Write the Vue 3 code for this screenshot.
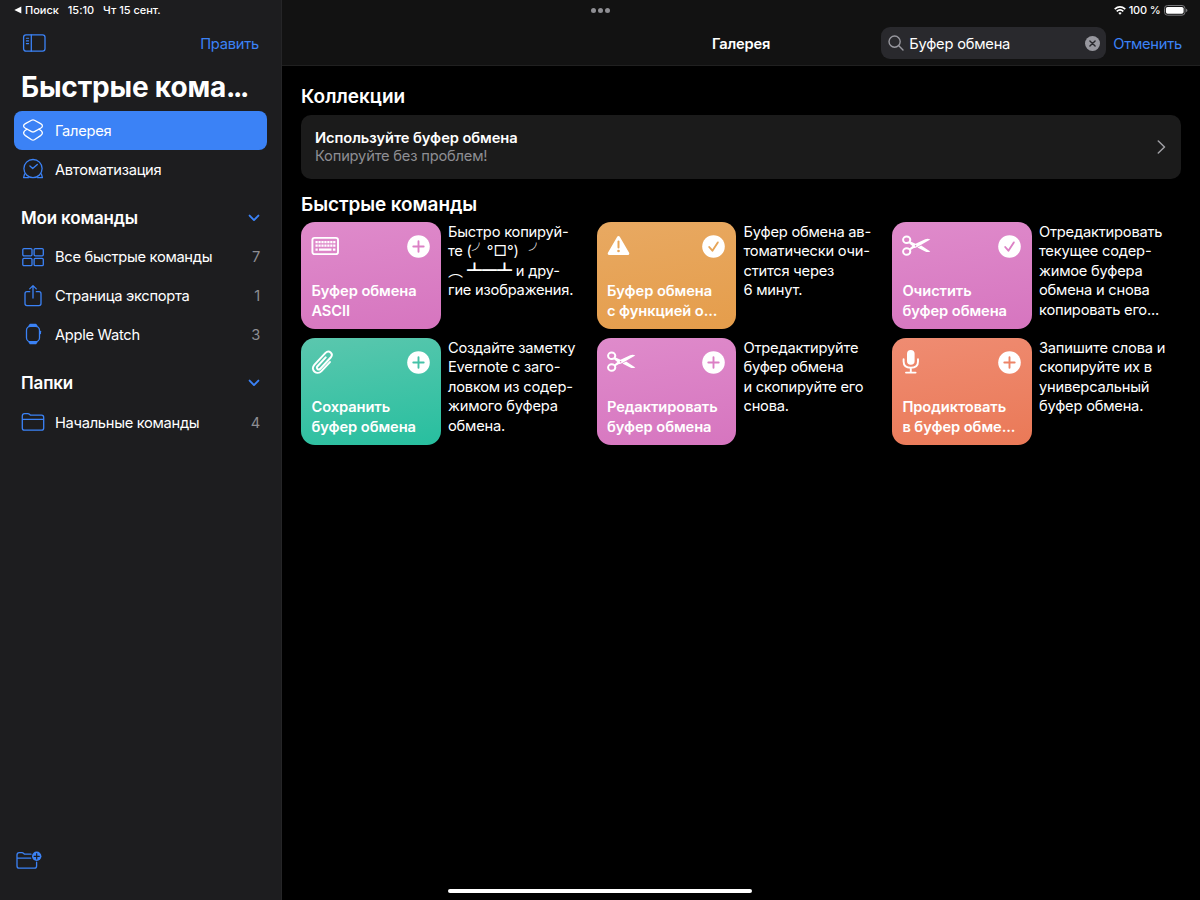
<script setup>
import { ref } from 'vue'

const search = ref('Буфер обмена')
const selected = ref('gallery')

const mainItems = [
  { id: 'gallery', title: 'Галерея' },
  { id: 'automation', title: 'Автоматизация' }
]

const sections = ref([
  {
    title: 'Мои команды',
    items: [
      { id: 'all', title: 'Все быстрые команды', count: 7 },
      { id: 'share', title: 'Страница экспорта', count: 1 },
      { id: 'watch', title: 'Apple Watch', count: 3 }
    ]
  },
  {
    title: 'Папки',
    items: [{ id: 'folder', title: 'Начальные команды', count: 4 }]
  }
])

const shortcuts = [
  { icon: 'keyboard', color: 'pink', added: false, title: ['Буфер обмена', 'ASCII'], text: ['Быстро копируй-', '', '', 'гие изображения.'], ascii: true },
  { icon: 'warning', color: 'orange', added: true, title: ['Буфер обмена', 'с функцией о...'], text: ['Буфер обмена ав-', 'томатически очи-', 'стится через', '6 минут.'] },
  { icon: 'scissors', color: 'pink', added: true, title: ['Очистить', 'буфер обмена'], text: ['Отредактировать', 'текущее содер-', 'жимое буфера', 'обмена и снова', 'копировать его...'] },
  { icon: 'clip', color: 'green', added: false, title: ['Сохранить', 'буфер обмена'], text: ['Создайте заметку', 'Evernote с заго-', 'ловком из содер-', 'жимого буфера', 'обмена.'] },
  { icon: 'scissors', color: 'pink', added: false, title: ['Редактировать', 'буфер обмена'], text: ['Отредактируйте', 'буфер обмена', 'и скопируйте его', 'снова.'] },
  { icon: 'mic', color: 'coral', added: false, title: ['Продиктовать', 'в буфер обме...'], text: ['Запишите слова и', 'скопируйте их в', 'универсальный', 'буфер обмена.'] }
]
</script>

<template>
  <div class="screen">
    <aside class="sidebar">
      <div class="status">
        <svg width="8" height="8" viewBox="0 0 8 8"><path d="M0.3 4 7.3 0.6v6.8z" fill="#fff" /></svg>
        <span class="back">Поиск</span>
        <span class="time">15:10</span>
        <span>Чт 15 сент.</span>
      </div>

      <div class="sideBar">
        <svg class="line" width="24" height="20" viewBox="0 0 24 20">
          <rect x="1.6" y="1.8" width="21.4" height="16.4" rx="2.4" />
          <path d="M9.3 1.8v16.4" />
          <path d="M4.4 5.2h2.2M4.4 7.900h2.200M4.400 10.600h2.200" stroke-width="1.1" />
        </svg>
        <button>Править</button>
      </div>

      <h1>Быстрые кома<span class="dotsEnd">...</span></h1>

      <nav>
        <a v-for="item in mainItems" :key="item.id" class="row" :class="{ active: selected === item.id }" @click="selected = item.id">
          <svg class="line" width="24" height="24" viewBox="0 0 24 24">
            <template v-if="item.id === 'gallery'">
              <path d="M10.600 2.200q1.400-.8 2.800 0l6.200 3.400q1.800 1 1.800 2.300 0 1.300-1.800 2.300l-6.200 3.400q-1.400.8-2.800 0L4.400 10.200Q2.600 9.200 2.600 7.900q0-1.300 1.800-2.300z" />
              <path d="M6 11.200q-3.400 1.800-3.400 3.800 0 1.300 1.800 2.600l6.200 4.100q1.400.8 2.800 0l6.200-4.100q1.800-1.300 1.800-2.600 0-2-3.400-3.800" />
            </template>
            <template v-else>
              <circle cx="12" cy="11.600" r="9.100" />
              <path d="M8.900 9 11.700 11.600 16.300 7.400" />
              <path d="M3.600 16.800 2.600 20.700h4.800M20.400 16.800l1 3.900h-4.800" />
            </template>
          </svg>
          <span>{{ item.title }}</span>
        </a>

        <section v-for="section in sections" :key="section.title">
          <header>
            <h2>{{ section.title }}</h2>
            <svg width="12" height="8" viewBox="0 0 12 8"><path d="M1.600 1.600 6 6.100l4.400-4.500" fill="none" stroke="#3b82f6" stroke-width="1.900" stroke-linecap="round" stroke-linejoin="round" /></svg>
          </header>
          <a v-for="item in section.items" :key="item.id" class="row" :class="{ active: selected === item.id }" @click="selected = item.id">
            <svg class="line" width="24" height="24" viewBox="0 0 24 24">
              <template v-if="item.id === 'all'">
                <rect x="1.800" y="3.600" width="9.200" height="7.200" rx="1.200" />
                <rect x="13.100" y="3.600" width="9.200" height="7.200" rx="1.200" />
                <rect x="1.800" y="13.400" width="9.200" height="7.200" rx="1.200" />
                <rect x="13.100" y="13.400" width="9.200" height="7.200" rx="1.200" />
              </template>
              <template v-else-if="item.id === 'share'">
                <path d="M8.700 7.700H6q-2 0-2 2v9.900q0 2 2 2h12q2 0 2-2V9.700q0-2-2-2h-2.700" />
                <path d="M12 14V1.700M8.700 4.900 12 1.600l3.300 3.300" />
              </template>
              <template v-else-if="item.id === 'watch'">
                <rect x="5.500" y="4.300" width="13" height="15.400" rx="4" />
                <path d="M8 4.200 9.200 2.400h5.600L16 4.200zM8 19.800l1.200 1.800h5.600l1.200-1.800z" fill="currentColor" />
                <path d="M19.400 9.300v2.300" />
              </template>
              <template v-else>
                <path d="M1.300 18V6q0-2.300 2.300-2.300h3.200q1 0 1.700.6l1 .9h11q2.200 0 2.200 2.200V18q0 2.200-2.200 2.200h-17Q1.300 20.200 1.300 18zM1.300 9.300h21.400" />
              </template>
            </svg>
            <span>{{ item.title }}</span>
            <span class="count">{{ item.count }}</span>
          </a>
        </section>
      </nav>

      <svg class="line newFolder" width="28" height="22" viewBox="0 0 28 22">
        <path d="M16 5.200H9.500l-1-.9Q7.900 3.700 7 3.700H4.200Q2 3.700 2 6v11q0 2.200 2.200 2.200h15.200q2.200 0 2.200-2.200v-3.800M2 9.200h13.700" />
        <circle cx="21.700" cy="7.300" r="4.700" fill="#3b82f6" stroke="none" />
        <path d="M21.700 4.700v5.200M19.100 7.300h5.200" stroke="#1d1d1f" stroke-width="1.200" />
      </svg>
    </aside>

    <main>
      <div class="topbar">
        <div class="dots"><i></i><i></i><i></i></div>
        <div class="battery">
          <svg width="12" height="9" viewBox="0 0 12 9" fill="none" stroke="#fff" stroke-width="1.700">
            <path d="M.7 3.200q5.300-4.500 10.600 0M2.700 5.300q3.300-2.700 6.600 0" />
            <path d="M6 8.700 4.300 6.900q1.700-1.300 3.400 0z" fill="#fff" stroke="none" />
          </svg>
          <span>100 %</span>
          <svg width="24" height="11" viewBox="0 0 24 11">
            <rect x=".5" y=".5" width="20.500" height="9.700" rx="3" fill="none" stroke="#77777a" />
            <rect x="1.900" y="1.900" width="17.700" height="6.900" rx="1.700" fill="#fff" />
            <path d="M22 3.700q1.400.4 1.400 1.700T22 7z" fill="#77777a" />
          </svg>
        </div>
        <div class="pageTitle">Галерея</div>
        <div class="searchArea">
          <label class="search">
            <svg width="16" height="16" viewBox="0 0 16 16" fill="none" stroke="#98989f" stroke-width="1.400" stroke-linecap="round"><circle cx="6.600" cy="6.600" r="5.600" /><path d="m10.800 10.800 4.200 4.200" /></svg>
            <input v-model="search" />
            <svg width="15" height="15" viewBox="0 0 15 15" @click="search = ''"><circle cx="7.500" cy="7.500" r="7.500" fill="#98989f" /><path d="m4.900 4.900 5.200 5.200m0-5.200-5.200 5.200" stroke="#29292d" stroke-width="1.400" stroke-linecap="round" /></svg>
          </label>
          <button>Отменить</button>
        </div>
      </div>

      <div class="content">
        <h3>Коллекции</h3>
        <div class="collection">
          <div>
            <div class="name">Используйте буфер обмена</div>
            <div class="hint">Копируйте без проблем!</div>
          </div>
          <svg width="9" height="14" viewBox="0 0 9 14"><path d="m1.300 1 6.200 6-6.200 6" fill="none" stroke="#a0a0a5" stroke-width="1.500" stroke-linecap="round" stroke-linejoin="round" /></svg>
        </div>

        <h3 class="second">Быстрые команды</h3>
        <div class="grid">
          <article v-for="(item, index) in shortcuts" :key="index">
            <div class="tile" :class="item.color">
              <div class="tileTop">
                <svg v-if="item.icon === 'keyboard'" width="29" height="24" viewBox="0 0 29 24">
                  <rect x="1.400" y="3.900" width="25.600" height="16.200" rx="2.200" fill="none" stroke="#fff" stroke-width="1.900" />
                  <path d="M4.500 8.200h20M4.500 11.600h20" stroke="#fff" stroke-width="2.200" stroke-dasharray="2.200 .75" />
                  <path d="M4.500 15.700h2.200M8 15.700h12.500M21.900 15.700h2.500" stroke="#fff" stroke-width="2.200" />
                </svg>
                <svg v-else-if="item.icon === 'warning'" width="24" height="24" viewBox="0 0 24 24">
                  <path d="M11.500 3.600 2.200 19.400h18.600z" fill="#fff" stroke="#fff" stroke-width="3" stroke-linejoin="round" />
                  <path d="M11.500 7.600v6" stroke="#e8a557" stroke-width="2" stroke-linecap="round" />
                  <circle cx="11.500" cy="17" r="1.300" fill="#e8a557" />
                </svg>
                <svg v-else-if="item.icon === 'scissors'" width="30" height="24" viewBox="0 0 30 24">
                  <g fill="none" stroke="#fff" stroke-width="2"><ellipse cx="4.700" cy="5.800" rx="3.600" ry="3.300" /><ellipse cx="4.700" cy="17.500" rx="3.600" ry="3.300" /></g>
                  <path d="m7.500 7.100 6 2.700 9.700-4.500q2.700-1.200 5.100.2L15.700 12.800q-2.200 1.200-4.300 1.400L8 16.500 6.800 14.900l3.600-2.900L6.700 9.100zM15.400 13.600l3.800-2.200 9.100 6q-2.400 1.300-5.100.1z" fill="#fff" />
                  <circle cx="13.600" cy="11.700" r=".8" fill="#dd84c7" />
                </svg>
                <svg v-else-if="item.icon === 'clip'" width="24" height="26" viewBox="0 0 24 26">
                  <path d="m14.700 8.400-8.200 8.800c-1.900 2.100.9 4.500 2.800 2.500L19.700 8.500c3.200-3.700-1.700-8.200-5.200-4.600L3.300 15.900c-4.300 5 2.600 11 7.200 6.200l8.400-9" fill="none" stroke="#fff" stroke-width="2" stroke-linecap="round" />
                </svg>
                <svg v-else width="20" height="26" viewBox="0 0 20 26">
                  <rect x="5" y="1" width="7.600" height="14.700" rx="3.800" fill="#fff" />
                  <path d="M1.600 10.300v2.200q0 6.200 7.200 6.200t7.200-6.200v-2.200M8.800 18.700v4.600M4 23.600h9.600" fill="none" stroke="#fff" stroke-width="1.900" stroke-linecap="round" />
                </svg>
                <svg class="mark" width="23" height="23" viewBox="0 0 23 23">
                  <circle cx="11.500" cy="11.500" r="11.300" fill="#fff" />
                  <path v-if="item.added" d="m7.200 12 3.200 3.700 5.400-8.300" />
                  <path v-else d="M11.500 6.300v10.400M6.300 11.500h10.400" />
                </svg>
              </div>
              <div class="tileTitle"><div v-for="line in item.title" :key="line">{{ line }}</div></div>
            </div>
            <div class="desc">
              <template v-for="(line, i) in item.text" :key="i">
                <div v-if="item.ascii && i === 1">те (<span class="cjk">╯</span><span class="face">°□°</span>) <span class="cjk arm">╯</span></div>
                <div v-else-if="item.ascii && i === 2"><span class="cjk">︵</span> <span class="cjk table">┻━┻</span> и дру-</div>
                <div v-else>{{ line }}</div>
              </template>
            </div>
          </article>
        </div>
      </div>
      <div class="homeBar"></div>
    </main>
  </div>
</template>

<style>
body {
  margin: 0;
  background: #000;
}
</style>

<style scoped>
.screen {
  display: flex;
  width: 1200px;
  height: 900px;
  overflow: hidden;
  background: #000;
  color: #fff;
  font-family: Inter, 'Noto Sans CJK JP', sans-serif;
  font-size: 14.7px;
}

h1, h2, h3 {
  margin: 0;
}

button {
  padding: 1px 0 0;
  border: none;
  background: none;
  color: #3b82f6;
  font: inherit;
  letter-spacing: -0.25px;
  cursor: pointer;
}

.sidebar {
  display: flex;
  flex-direction: column;
  flex: none;
  box-sizing: border-box;
  width: 282px;
  background: #1d1d1f;
  border-right: 1px solid #252527;
}

.status {
  display: flex;
  align-items: center;
  height: 20px;
  padding: 0 0 1px 14px;
  font-size: 11px;
  font-weight: 500;
  letter-spacing: -0.02px;
  white-space: nowrap;
}

.back {
  margin: 0 9px 0 3px;
}

.time {
  margin-right: 9px;
}

.sideBar {
  display: flex;
  align-items: center;
  justify-content: space-between;
  height: 44px;
  padding: 0 22px 0 22px;
}

h1 {
  height: 46px;
  padding-left: 21px;
  font-size: 28px;
  line-height: 44px;
  letter-spacing: -0.17px;
  white-space: nowrap;
}

.dotsEnd {
  letter-spacing: -2.4px;
}

.line {
  flex: none;
  fill: none;
  stroke: currentColor;
  stroke-width: 1.3;
  stroke-linecap: round;
  stroke-linejoin: round;
  color: #3b82f6;
}

.row {
  display: flex;
  align-items: center;
  gap: 10px;
  height: 38.7px;
  margin: 0 14px;
  padding: 0 7px;
  border-radius: 8px;
  letter-spacing: -0.3px;
  cursor: pointer;
}

.row span {
  padding-top: 1px;
}

.row.active {
  background: #3b82f6;
}

.row.active .line {
  color: #fff;
}

.count {
  margin-left: auto;
  color: #8e8e93;
}

section header {
  display: flex;
  align-items: center;
  justify-content: space-between;
  box-sizing: border-box;
  height: 49.2px;
  padding: 9.5px 21px 0 21px;
}

h2 {
  font-size: 17px;
  font-weight: 600;
  letter-spacing: -0.15px;
}

.newFolder {
  margin: auto 0 29.5px 15px;
}

main {
  flex: 1;
  position: relative;
}

.topbar {
  display: grid;
  grid-template-columns: 1fr 1fr;
  grid-template-rows: 21px 44px;
  align-items: center;
  background: #121212;
  border-bottom: 1px solid #202020;
}

.dots {
  display: flex;
  gap: 2px;
  padding-left: 308.5px;
}

.dots i {
  width: 5px;
  height: 5px;
  border-radius: 50%;
  background: #8e8e93;
}

.battery {
  display: flex;
  align-items: center;
  justify-content: flex-end;
  gap: 3px;
  padding: 0 12.500px 1px 0;
  font-size: 11px;
  font-weight: 500;
  letter-spacing: -0.15px;
}

.pageTitle {
  padding: 1px 0 0 430px;
  font-weight: 600;
  letter-spacing: -0.2px;
}

.searchArea {
  display: flex;
  align-items: center;
  justify-content: flex-end;
  gap: 7px;
  padding-right: 18px;
}

.search {
  display: flex;
  align-items: center;
  gap: 5px;
  box-sizing: border-box;
  width: 225px;
  height: 32px;
  padding: 0 6px 0 7px;
  border-radius: 9px;
  background: #29292d;
}

input {
  flex: 1;
  min-width: 0;
  padding: 1px 0 0;
  border: none;
  outline: none;
  background: none;
  color: #fff;
  font: inherit;
  letter-spacing: -0.22px;
}

.content {
  padding: 17px 19px 0 19px;
}

h3 {
  height: 32px;
  font-size: 19px;
  font-weight: 600;
  line-height: 27px;
}

.second {
  height: 31px;
  margin-top: 12px;
  letter-spacing: -0.1px;
}

.collection {
  display: flex;
  align-items: center;
  justify-content: space-between;
  box-sizing: border-box;
  height: 64px;
  padding: 0 15px 0 14px;
  border-radius: 10px;
  background: #1b1b1b;
  line-height: 18.5px;
}

.name {
  font-weight: 600;
  letter-spacing: -0.08px;
}

.hint {
  color: #8e8e93;
  letter-spacing: -0.2px;
}

.grid {
  display: grid;
  grid-template-columns: repeat(3, 1fr);
  gap: 9px 6.5px;
  padding-top: 0.3px;
}

article {
  display: flex;
  gap: 7.3px;
  height: 107px;
}

.tile {
  display: flex;
  flex-direction: column;
  justify-content: space-between;
  flex: none;
  box-sizing: border-box;
  width: 139.7px;
  padding: 12px 11px 8.4px 10.400px;
  border-radius: 14px;
}

.tileTop {
  display: flex;
  justify-content: space-between;
  align-items: center;
  height: 24px;
}

.mark path {
  fill: none;
  stroke-width: 1.9;
  stroke-linecap: round;
  stroke-linejoin: round;
}

.tileTitle {
  font-weight: 600;
  line-height: 19.4px;
  letter-spacing: -0.08px;
  white-space: nowrap;
}

.pink {
  background: linear-gradient(170deg, #df8bcb, #d675bf);
}

.pink .mark path {
  stroke: #dc80c5;
}

.orange {
  background: linear-gradient(170deg, #e8a962, #e59d4b);
}

.orange .mark path {
  stroke: #e7a558;
}

.green {
  background: linear-gradient(170deg, #5bc7ae, #27bf9f);
}

.green .mark path {
  stroke: #45c2a7;
}

.coral {
  background: linear-gradient(170deg, #ef8c72, #ea7957);
}

.coral .mark path {
  stroke: #ed8467;
}

.desc {
  padding-top: 0.7px;
  line-height: 19.4px;
  letter-spacing: -0.22px;
  white-space: nowrap;
}

.desc > div {
  height: 19.4px;
}

.cjk {
  font-family: 'Noto Sans CJK JP', sans-serif;
  font-size: 15px;
  line-height: 1;
  letter-spacing: 0;
}

.face {
  letter-spacing: 0;
}

.arm {
  margin-left: 6px;
}

.table {
  font-weight: 700;
}

.homeBar {
  position: absolute;
  left: 166px;
  bottom: 7px;
  width: 304px;
  height: 4px;
  border-radius: 2px;
  background: #fff;
}
</style>
